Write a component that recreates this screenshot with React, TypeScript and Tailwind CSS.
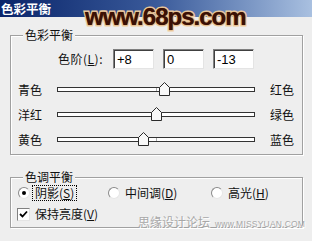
import React from 'react';

const sliders = [
  { left: '青色', right: '红色', value: 8 },
  { left: '洋红', right: '绿色', value: 0 },
  { left: '黄色', right: '蓝色', value: -13 },
];

const Thumb = ({ value }: { value: number }) => (
  <svg width="11" height="14" viewBox="0 0 11 14" className="absolute top-[-6px]" style={{ left: 93 + value }}>
    <path d="M0.5 5.5 L5.5 0.5 L10.5 5.5 V13.5 H0.5 Z" fill="#f8f8f8" stroke="#2a2a2a" />
  </svg>
);

const SliderRow = ({ left, right, value }: { left: string; right: string; value: number }) => (
  <div className="flex items-center h-[25px] pl-[7px]">
    <span className="w-[39px] text-[12px] leading-none">{left}</span>
    <div className="relative w-[198px] h-[5px] border border-[#333] bg-white">
      <span className="absolute left-[98px] top-0 w-px h-[3px] bg-[#aaa]" />
      <Thumb value={value} />
    </div>
    <span className="ml-[15px] text-[12px] leading-none">{right}</span>
  </div>
);

const NumBox = ({ v }: { v: string }) => (
  <div className="w-[41px] h-[20px] bg-white border border-t-[#808080] border-l-[#808080] border-b-[#e4e4e4] border-r-[#e4e4e4] shadow-[inset_1px_1px_0_#404040] flex items-center pl-[3px] font-['Liberation_Sans',sans-serif] text-[13px] leading-none text-black">
    {v}
  </div>
);

const Radio = ({ checked }: { checked?: boolean }) => (
  <span className="w-[12px] h-[12px] rounded-full bg-white border border-t-[#8a8a8a] border-l-[#8a8a8a] border-b-[#e6e6e6] border-r-[#e6e6e6] flex items-center justify-center shrink-0">
    {checked && <span className="w-[4px] h-[4px] rounded-full bg-black" />}
  </span>
);

const GroupLabel = ({ text }: { text: string }) => (
  <span className="absolute left-[12px] top-[-8px] px-[2px] bg-[#eeeeee] text-[12px] leading-[14px]">{text}</span>
);

export default function App() {
  return (
    <div className="relative w-[312px] h-[241px] bg-[#eeeeee] overflow-hidden font-['Noto_Sans_CJK_SC',sans-serif] text-[#111]">
      <div className="h-[17px] bg-gradient-to-r from-[#0a246a] via-[#3a5a9a] to-[#a9c0e0] flex items-center pl-[1px]">
        <span className="text-white font-bold text-[12.5px] leading-[17px]">色彩平衡</span>
      </div>

      <div className="pl-[10px] pt-[18px]">
        <div className="relative w-[293px] border border-[#a0a0a0] shadow-[inset_1px_1px_0_#fff,1px_1px_0_#fff] pt-[13px] pb-[2px]">
          <GroupLabel text="色彩平衡" />
          <div className="flex items-center h-[20px] pl-[47px]">
            <span className="w-[52px] text-[12px] leading-none tracking-[0.5px]">
              色阶(<span className="underline">L</span>):
            </span>
            <div className="ml-[3px] flex gap-[9px]">
              <NumBox v="+8" />
              <NumBox v="0" />
              <NumBox v="-13" />
            </div>
          </div>
          <div className="mt-[8px]">
            {sliders.map((s) => (
              <SliderRow key={s.left} {...s} />
            ))}
          </div>
        </div>

        <div className="relative mt-[22px] w-[293px] h-[51px] border border-[#a0a0a0] shadow-[inset_1px_1px_0_#fff,1px_1px_0_#fff] pt-[7px]">
          <GroupLabel text="色调平衡" />
          <div className="flex items-center h-[15px] pl-[7px] text-[12px] leading-none">
            <div className="w-[90px] flex items-center">
              <Radio checked />
              <span className="ml-[3px] px-[2px] py-[1px] outline-1 outline-dotted outline-black">
                阴影(<span className="underline">S</span>)
              </span>
            </div>
            <div className="w-[103px] flex items-center">
              <Radio />
              <span className="ml-[5px]">
                中间调(<span className="underline">D</span>)
              </span>
            </div>
            <div className="flex items-center">
              <Radio />
              <span className="ml-[5px]">
                高光(<span className="underline">H</span>)
              </span>
            </div>
          </div>
          <div className="flex items-center h-[14px] mt-[7px] pl-[6px] text-[12px] leading-none">
            <span className="w-[13px] h-[13px] bg-white border border-t-[#808080] border-l-[#808080] border-b-[#e4e4e4] border-r-[#e4e4e4] flex items-center justify-center">
              <svg width="9" height="9" viewBox="0 0 9 9">
                <path d="M1 4 L3.5 6.5 L8 1.5" fill="none" stroke="#000" strokeWidth="1.8" />
              </svg>
            </span>
            <span className="ml-[5px]">
              保持亮度(<span className="underline">V</span>)
            </span>
          </div>
        </div>
      </div>

      <div className="absolute left-[85px] top-[5px] font-['Liberation_Sans',sans-serif] font-bold text-[24px] leading-none tracking-[-1px] text-[#3a1005] [paint-order:stroke_fill] [-webkit-text-stroke:3px_#f0cfa0] [text-shadow:0_0_1px_#6a2a10]">
        www.68ps.com
      </div>

      <div className="absolute left-[138px] top-[216px] flex items-end text-[#a8a8a8] [text-shadow:1px_1px_0_#fff]">
        <span className="text-[12px] leading-none">思缘设计论坛</span>
        <span className="ml-[5px] font-['Liberation_Sans',sans-serif] text-[8.5px] leading-none tracking-[0.2px]">www.MISSYUAN.COM</span>
      </div>
    </div>
  );
}
